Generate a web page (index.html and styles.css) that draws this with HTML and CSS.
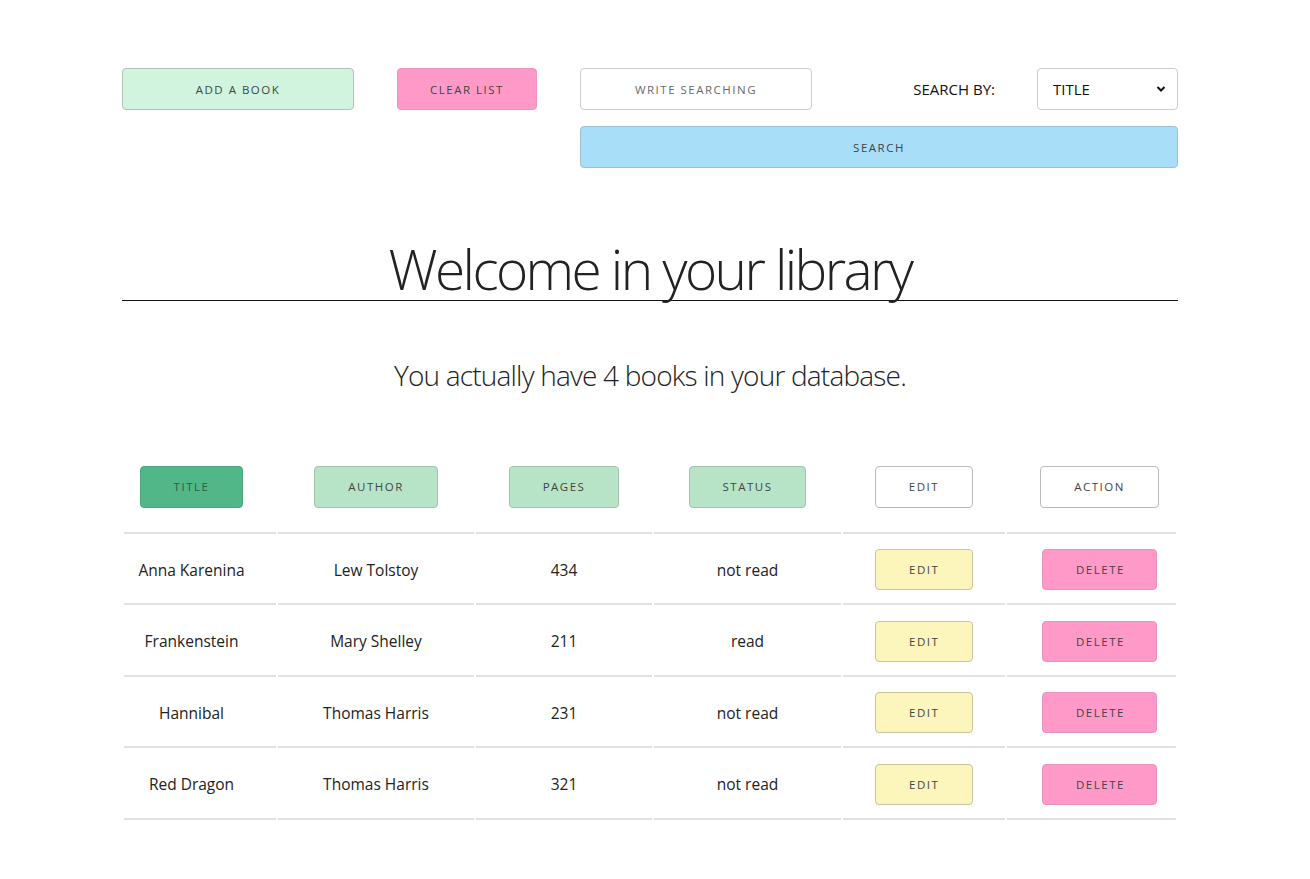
FILE: index.html
```html
<!DOCTYPE html>
<html lang="en">
<head>
<meta charset="utf-8">
<title>Library</title>
<link rel="stylesheet" href="styles.css">
</head>
<body>
<div class="page">
  <div class="toolbar">
    <button class="btn btn-add">Add a book</button>
    <button class="btn btn-clear">Clear list</button>
    <div class="search">
      <div class="search-row">
        <input class="search-input" type="text" placeholder="Write searching">
        <label class="search-label">SEARCH BY:</label>
        <div class="select-wrap">
          <select class="search-select"><option>TITLE</option><option>AUTHOR</option></select>
          <svg class="chev" width="10" height="8" viewBox="0 0 10 8"><path d="M1.5 2 L5 5.5 L8.5 2" fill="none" stroke="#111" stroke-width="2"/></svg>
        </div>
      </div>
      <button class="btn btn-search">Search</button>
    </div>
  </div>

  <h1 class="title">Welcome in your library</h1>
  <p class="count">You actually have 4 books in your database.</p>

  <table class="books">
    <colgroup>
      <col class="c1"><col class="c2"><col class="c3"><col class="c4"><col class="c5"><col class="c6">
    </colgroup>
    <thead>
      <tr>
        <th><button class="btn btn-sort active">Title</button></th>
        <th><button class="btn btn-sort">Author</button></th>
        <th><button class="btn btn-sort">Pages</button></th>
        <th><button class="btn btn-sort">Status</button></th>
        <th><button class="btn btn-plain">Edit</button></th>
        <th><button class="btn btn-plain">Action</button></th>
      </tr>
    </thead>
    <tbody>
      <tr>
        <td>Anna Karenina</td><td>Lew Tolstoy</td><td>434</td><td>not read</td>
        <td><button class="btn btn-edit">Edit</button></td>
        <td><button class="btn btn-delete">Delete</button></td>
      </tr>
      <tr>
        <td>Frankenstein</td><td>Mary Shelley</td><td>211</td><td>read</td>
        <td><button class="btn btn-edit">Edit</button></td>
        <td><button class="btn btn-delete">Delete</button></td>
      </tr>
      <tr>
        <td>Hannibal</td><td>Thomas Harris</td><td>231</td><td>not read</td>
        <td><button class="btn btn-edit">Edit</button></td>
        <td><button class="btn btn-delete">Delete</button></td>
      </tr>
      <tr>
        <td>Red Dragon</td><td>Thomas Harris</td><td>321</td><td>not read</td>
        <td><button class="btn btn-edit">Edit</button></td>
        <td><button class="btn btn-delete">Delete</button></td>
      </tr>
    </tbody>
  </table>
</div>
</body>
</html>
```

FILE: styles.css
```css
* { box-sizing: border-box; }

body {
  margin: 0;
  background: #fff;
  color: #222;
  font-family: "Open Sans", "Noto Sans", sans-serif;
}

.page {
  width: 1056px;
  margin-left: 122px;
  padding-top: 68px;
}

.btn {
  font-family: "Open Sans", sans-serif;
  font-size: 11.5px;
  font-weight: 500;
  letter-spacing: 1.5px;
  text-transform: uppercase;
  white-space: nowrap;
  color: #444;
  height: 42px;
  padding: 0 33px;
  border: 1px solid #b4b8b5;
  border-radius: 4px;
  background: #fff;
  cursor: pointer;
}

.toolbar {
  display: flex;
  align-items: flex-start;
}

.btn-add {
  width: 232px;
  background: #d0f4de;
  border-color: #b1c2b7;
}

.btn-clear {
  width: 140px;
  padding: 0;
  margin-left: 43px;
  background: #ff99c8;
  border-color: #f292be;
}

.search {
  margin-left: 43px;
  flex: 1;
  display: flex;
  flex-direction: column;
  gap: 16px;
}

.search-row {
  display: flex;
  align-items: center;
}

.search-input {
  width: 232px;
  height: 42px;
  border: 1px solid #ccc;
  border-radius: 4px;
  text-align: center;
  font-family: "Open Sans", sans-serif;
  font-size: 11.5px;
  font-weight: 500;
  letter-spacing: 1.5px;
  text-transform: uppercase;
  color: #555;
}
.search-input::placeholder { color: #6a6a6a; }

.search-label {
  margin-left: auto;
  margin-right: 42px;
  font-size: 15px;
  color: #111;
}

.select-wrap {
  position: relative;
  width: 141px;
  height: 42px;
}

.search-select {
  appearance: none;
  -webkit-appearance: none;
  width: 100%;
  height: 100%;
  border: 1px solid #ccc;
  border-radius: 4px;
  background: #fff;
  padding: 0 15px;
  font-family: "Open Sans", sans-serif;
  font-size: 15px;
  color: #111;
}

.chev {
  position: absolute;
  right: 12px;
  top: 17px;
  pointer-events: none;
}

.btn-search {
  width: 100%;
  padding: 0;
  background: #a9def9;
  border-color: #9cc0d2;
}

.title {
  margin: 72px 0 0;
  font-weight: 300;
  font-size: 55px;
  letter-spacing: -2.6px;
  line-height: 1.05;
  text-align: center;
  color: #222;
  border-bottom: 1px solid #111;
  padding-bottom: 2px;
}

.count {
  margin: 55px 0 0;
  text-align: center;
  font-weight: 300;
  font-size: 28px;
  letter-spacing: -0.8px;
  color: #222;
}

.books {
  margin-top: 62px;
  width: 1056px;
  table-layout: fixed;
  border-collapse: separate;
  border-spacing: 2px 0;
}

.c1 { width: 152px; }
.c2 { width: 196px; }
.c3 { width: 176px; }
.c4 { width: 187px; }
.c5 { width: 162px; }
.c6 { width: 169px; }

.books th,
.books td {
  text-align: center;
  border-bottom: 2px solid #e2e2e2;
  font-size: 15.5px;
  font-weight: 400;
  color: #222;
}

.books th {
  height: 78px;
  padding: 0 0 14px;
}

.books td {
  height: 71.5px;
  padding: 2px 0 0;
}

.books th:first-child,
.books td:first-child { padding-right: 17px; }
.books th:last-child,
.books td:last-child { padding-left: 16px; }

.btn-sort {
  background: #b7e4c7;
  border-color: #a3c3ad;
}
.btn-sort.active {
  background: #52b788;
  border-color: #4aa67b;
  color: #2f5d46;
}

.btn-plain {
  background: #fff;
  border-color: #bbb;
}

.btn-edit {
  height: 41px;
  width: 98px;
  background: #fcf6bd;
  border-color: #c9c49a;
}

.btn-delete {
  height: 41px;
  width: 115px;
  background: #ff99c8;
  border-color: #eb93bc;
}
```
